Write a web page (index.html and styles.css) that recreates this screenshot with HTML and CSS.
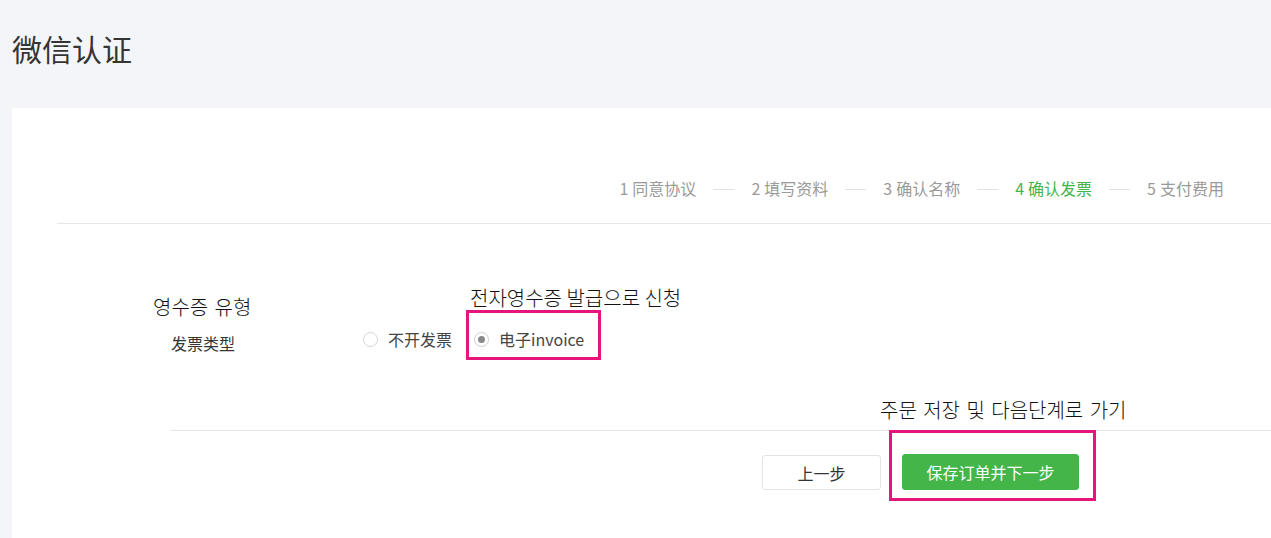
FILE: index.html
```html
<!DOCTYPE html>
<html lang="zh-CN">
<head>
<meta charset="utf-8">
<title>微信认证</title>
<link rel="stylesheet" href="styles.css">
</head>
<body>
<header class="page-head">
  <h1 class="page-title">微信认证</h1>
</header>
<main class="card">
  <nav class="steps">
    <span class="step"><span class="num">1</span>同意协议</span>
    <span class="sep"></span>
    <span class="step"><span class="num">2</span>填写资料</span>
    <span class="sep"></span>
    <span class="step"><span class="num">3</span>确认名称</span>
    <span class="sep"></span>
    <span class="step step-active"><span class="num">4</span>确认发票</span>
    <span class="sep"></span>
    <span class="step"><span class="num">5</span>支付费用</span>
  </nav>
  <section class="form">
    <div class="form-row">
      <div class="form-label">
        <span class="note note-label">영수증 유형</span>
        发票类型
      </div>
      <div class="radios">
        <label class="radio">
          <span class="radio-dot"></span>
          <span class="radio-text">不开发票</span>
        </label>
        <div class="mark mark-radio">
          <span class="note note-radio">전자영수증 발급으로 신청</span>
          <label class="radio">
            <span class="radio-dot radio-dot-on"></span>
            <span class="radio-text">电子invoice</span>
          </label>
        </div>
      </div>
    </div>
  </section>
  <footer class="actions">
    <button class="btn btn-default">上一步</button>
    <div class="mark mark-btn">
      <span class="note note-btn">주문 저장 및 다음단계로 가기</span>
      <button class="btn btn-primary">保存订单并下一步</button>
    </div>
  </footer>
</main>
</body>
</html>
```
FILE: styles.css
```css
html, body {
  margin: 0;
  padding: 0;
}
body {
  background: #f4f5f8;
  font-family: "Noto Sans CJK SC", "Noto Sans", sans-serif;
  color: #353535;
  overflow: hidden;
  height: 538px;
}
.page-head {
  height: 108px;
  padding-left: 12px;
  box-sizing: border-box;
}
.page-title {
  margin: 0;
  padding-top: 28px;
  font-size: 30px;
  line-height: 40px;
  font-weight: normal;
  color: #353535;
}
.card {
  margin-left: 12px;
  background: #fff;
  height: 430px;
  padding-top: 69px;
  box-sizing: border-box;
}
.steps {
  margin-left: 45px;
  display: flex;
  justify-content: flex-end;
  align-items: center;
  padding-right: 47px;
  height: 22px;
  padding-bottom: 24px;
  border-bottom: 1px solid #e7e7eb;
  font-size: 16px;
  line-height: 22px;
  color: #9a9a9a;
}
.num {
  margin-right: 4px;
}
.step-active {
  color: #44b549;
}
.sep {
  width: 21px;
  height: 1px;
  background: #e1e1e1;
  margin: 2px 17px 0;
}
.form {
  padding-top: 86px;
  padding-left: 159px;
}
.form-row {
  display: flex;
  align-items: flex-start;
  height: 50px;
}
.form-label {
  position: relative;
  width: 192px;
  padding-top: 22px;
  font-size: 16px;
  line-height: 22px;
  color: #353535;
}
.radios {
  display: flex;
  align-items: baseline;
}
.radio {
  display: flex;
  align-items: center;
  font-size: 16px;
  line-height: 22px;
  color: #444;
}
.radio-dot {
  width: 13px;
  height: 13px;
  border: 1px solid #d6d6d6;
  border-radius: 50%;
  margin-right: 10px;
  position: relative;
  box-sizing: content-box;
}
.radio-dot-on {
  border-color: #cfcfcf;
}
.radio-dot-on::after {
  content: "";
  position: absolute;
  left: 3px;
  top: 3px;
  width: 7px;
  height: 7px;
  border-radius: 50%;
  background: #8a8a8a;
}
.mark {
  position: relative;
  border: 3px solid #e5157c;
}
.mark-radio {
  margin-left: 14px;
  padding: 15px 14px 7px 5px;
}
.note {
  position: absolute;
  white-space: nowrap;
  font-family: "Noto Sans CJK KR", "Noto Sans", sans-serif;
  font-size: 20px;
  line-height: 24px;
  color: #111;
  font-weight: 300;
}
.note-label {
  left: -18px;
  top: -15px;
  word-spacing: 2px;
}
.note-radio {
  left: 1px;
  top: -27px;
}
.note-btn {
  left: -12px;
  top: -35px;
  word-spacing: 2px;
}
.actions {
  margin-top: 70px;
  margin-left: 158px;
  border-top: 1px solid #e7e7eb;
  display: flex;
  align-items: flex-start;
}
.btn {
  font-family: "Noto Sans CJK SC", "Noto Sans", sans-serif;
  font-size: 16px;
  border-radius: 3px;
  cursor: pointer;
  box-sizing: border-box;
}
.btn-default {
  margin-left: 592px;
  margin-top: 24px;
  width: 119px;
  height: 35px;
  background: #fff;
  border: 1px solid #e4e4e4;
  color: #333;
}
.mark-btn {
  margin-left: 8px;
  margin-top: -1px;
  padding: 21px 14px 8px 10px;
}
.btn-primary {
  display: block;
  width: 177px;
  height: 36px;
  background: #44b549;
  border: 1px solid #44b549;
  color: #fff;
}
```
